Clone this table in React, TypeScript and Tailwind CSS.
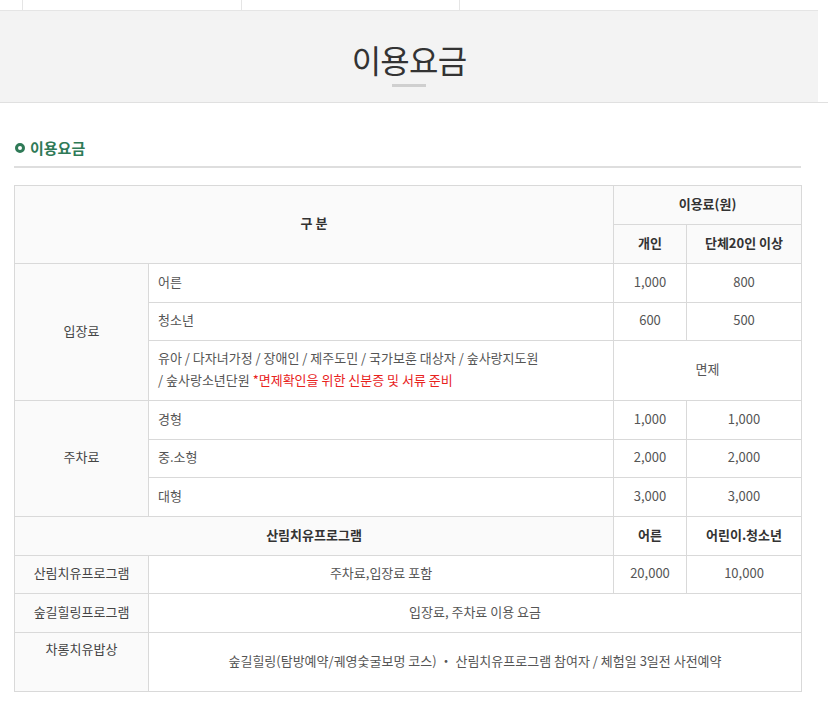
import React from "react";

const th = "border border-[#d9d9d9] bg-[#fafafa] text-[13px] font-bold text-[#333] text-center align-middle pb-[3px]";
const thWhite = "border border-[#d9d9d9] bg-white text-[13px] font-bold text-[#333] text-center align-middle pb-[3px]";
const td = "border border-[#d9d9d9] text-[13px] text-[#555] text-center align-middle pb-[3px]";
const tdLeft = "border border-[#d9d9d9] text-[13px] text-[#555] text-left pl-[9px] align-middle pb-[3px]";
const label = "border border-[#d9d9d9] bg-[#fafafa] text-[13px] text-[#444] text-center align-middle pb-[3px]";

export default function App() {
  return (
    <div
      className="w-[828px] h-[701px] bg-white overflow-hidden"
      style={{ fontFamily: '"Noto Sans CJK KR", "Noto Sans", sans-serif' }}
    >
      {/* top nav strip */}
      <div className="flex h-[11px] border-b border-[#e5e5e5] w-[818px]">
        <div className="w-[22px]" />
        <div className="w-[219px] border-l border-[#e5e5e5]" />
        <div className="w-[218px] border-l border-[#e5e5e5]" />
        <div className="flex-1 border-l border-[#e5e5e5]" />
      </div>

      {/* page title band */}
      <div className="border-b border-[#e0e0e0]">
        <div className="w-[818px] h-[91px] bg-[#f3f3f3] flex flex-col items-center pt-[28px]">
          <h1 className="text-[32px] leading-[40px] text-[#333] font-normal tracking-tight">이용요금</h1>
          <div className="mt-[5px] w-[34px] h-[3px] bg-[#cfcfcf]" />
        </div>
      </div>

      {/* section */}
      <div className="pl-[14px] w-[801px]">
        <div className="mt-[35px] flex items-center gap-[5px] pl-[1px]">
          <span className="w-[10px] h-[10px] rounded-full border-[3px] border-[#2f7a57]" />
          <h2 className="text-[15px] font-bold text-[#2f7a57] leading-[20px]">이용요금</h2>
        </div>
        <div className="mt-[8px] h-[2px] bg-[#dedede]" />

        <table className="mt-[17px] w-[787px] border-collapse table-fixed">
          <colgroup>
            <col className="w-[134px]" />
            <col className="w-[465px]" />
            <col className="w-[73px]" />
            <col className="w-[115px]" />
          </colgroup>
          <tbody>
            <tr className="h-[39px]">
              <th colSpan={2} rowSpan={2} className={th}>구 분</th>
              <th colSpan={2} className={th}>이용료(원)</th>
            </tr>
            <tr className="h-[39px]">
              <th className={th}>개인</th>
              <th className={th}>단체20인 이상</th>
            </tr>
            <tr className="h-[39px]">
              <td rowSpan={3} className={label}>입장료</td>
              <td className={tdLeft}>어른</td>
              <td className={td}>1,000</td>
              <td className={td}>800</td>
            </tr>
            <tr className="h-[38px]">
              <td className={tdLeft}>청소년</td>
              <td className={td}>600</td>
              <td className={td}>500</td>
            </tr>
            <tr className="h-[60px]">
              <td className={tdLeft + " leading-[22px]"}>
                유아 / 다자녀가정 / 장애인 / 제주도민 / 국가보훈 대상자 / 숲사랑지도원
                <br />/ 숲사랑소년단원 <span className="text-[#e8231d]">*면제확인을 위한 신분증 및 서류 준비</span>
              </td>
              <td colSpan={2} className={td}>면제</td>
            </tr>
            <tr className="h-[39px]">
              <td rowSpan={3} className={label}>주차료</td>
              <td className={tdLeft}>경형</td>
              <td className={td}>1,000</td>
              <td className={td}>1,000</td>
            </tr>
            <tr className="h-[38px]">
              <td className={tdLeft}>중.소형</td>
              <td className={td}>2,000</td>
              <td className={td}>2,000</td>
            </tr>
            <tr className="h-[39px]">
              <td className={tdLeft}>대형</td>
              <td className={td}>3,000</td>
              <td className={td}>3,000</td>
            </tr>
            <tr className="h-[39px]">
              <th colSpan={2} className={th}>산림치유프로그램</th>
              <th className={thWhite}>어른</th>
              <th className={thWhite}>어린이.청소년</th>
            </tr>
            <tr className="h-[38px]">
              <td className={label}>산림치유프로그램</td>
              <td className={td}>주차료,입장료 포함</td>
              <td className={td}>20,000</td>
              <td className={td}>10,000</td>
            </tr>
            <tr className="h-[39px]">
              <td className={label}>숲길힐링프로그램</td>
              <td colSpan={3} className={td}>입장료, 주차료 이용 요금</td>
            </tr>
            <tr className="h-[59px]">
              <td className={label + " !align-top pt-[6px]"}>차롱치유밥상</td>
              <td colSpan={3} className={td}>
                숲길힐링(탐방예약/궤영숯굴보멍 코스) ・ 산림치유프로그램 참여자 / 체험일 3일전 사전예약
              </td>
            </tr>
          </tbody>
        </table>
      </div>
    </div>
  );
}
